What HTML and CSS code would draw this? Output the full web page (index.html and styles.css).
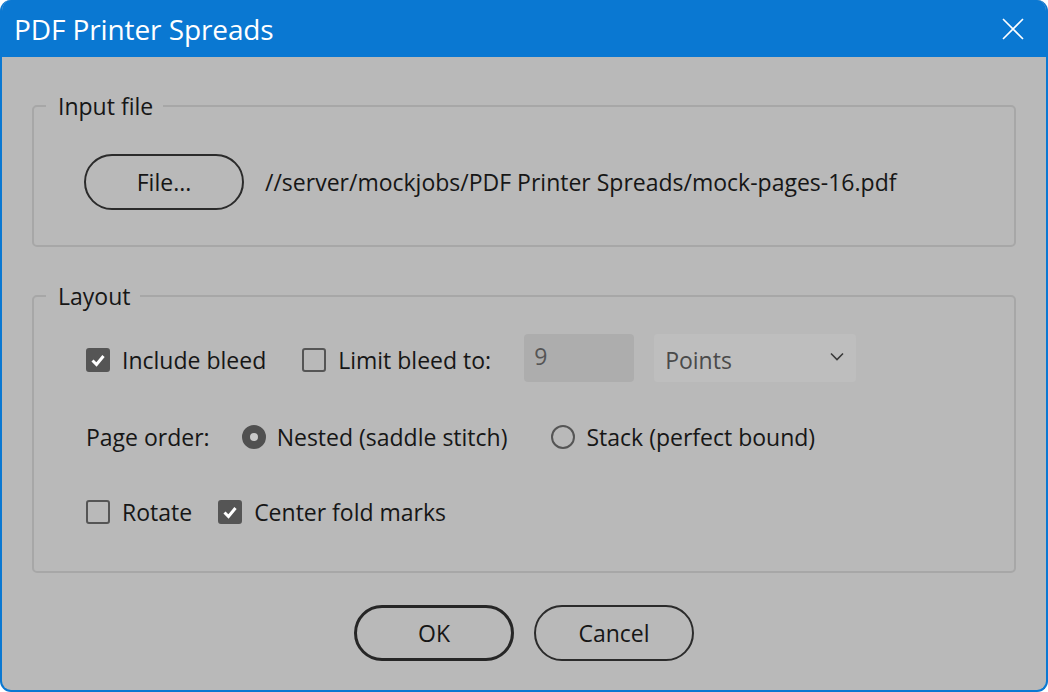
FILE: index.html
```html
<!DOCTYPE html>
<html>
<head>
<meta charset="utf-8">
<title>PDF Printer Spreads</title>
<link rel="stylesheet" href="styles.css">
</head>
<body>
<div class="window">
  <div class="titlebar">
    <span class="title">PDF Printer Spreads</span>
    <svg class="close" width="22" height="22" viewBox="0 0 22 22"><path d="M1 1L21 21M21 1L1 21" stroke="#fff" stroke-width="1.6" fill="none"/></svg>
  </div>
  <div class="content">
    <fieldset class="group group-input">
      <legend>Input file</legend>
      <div class="group-body file-row">
        <button class="btn">File...</button>
        <span class="path">//server/mockjobs/PDF Printer Spreads/mock-pages-16.pdf</span>
      </div>
    </fieldset>
    <fieldset class="group group-layout">
      <legend>Layout</legend>
      <div class="group-body">
        <div class="row row1">
          <span class="check checked"><svg width="24" height="24" viewBox="0 0 24 24"><path d="M6.5 12.5L10.5 16.5L17.5 8" stroke="#fff" stroke-width="3" fill="none"/></svg></span>
          <span class="label gap-36">Include bleed</span>
          <span class="check"></span>
          <span class="label gap-31">Limit bleed to:</span>
          <span class="input">9</span>
          <span class="select"><span>Points</span><svg width="14" height="9" viewBox="0 0 14 9"><path d="M1 1.5L7 7.5L13 1.5" stroke="#3a3a3a" stroke-width="1.6" fill="none"/></svg></span>
        </div>
        <div class="row row2">
          <span class="label gap-32">Page order:</span>
          <span class="radio on"></span>
          <span class="label gap-41">Nested (saddle stitch)</span>
          <span class="radio"></span>
          <span class="label">Stack (perfect bound)</span>
        </div>
        <div class="row row3">
          <span class="check"></span>
          <span class="label gap-26">Rotate</span>
          <span class="check checked"><svg width="24" height="24" viewBox="0 0 24 24"><path d="M6.5 12.5L10.5 16.5L17.5 8" stroke="#fff" stroke-width="3" fill="none"/></svg></span>
          <span class="label">Center fold marks</span>
        </div>
      </div>
    </fieldset>
    <div class="buttons">
      <button class="btn btn-default">OK</button>
      <button class="btn">Cancel</button>
    </div>
  </div>
</div>
</body>
</html>
```
FILE: styles.css
```css
* { box-sizing: border-box; }
html, body { margin: 0; padding: 0; background: #fff; }
body { font-family: "Open Sans", "Noto Sans", sans-serif; color: #161616; }
.window {
  width: 1048px; height: 692px;
  border: 2px solid #0a78d2; border-top: 0;
  border-radius: 11px;
  overflow: hidden;
  background: #b9b9b9;
  display: flex; flex-direction: column;
}
.titlebar {
  height: 57px; background: #0a78d2; color: #fff;
  display: flex; align-items: center; justify-content: space-between;
  padding: 0 22px 0 12px;
  flex: none;
}
.title { font-size: 28px; letter-spacing: -0.1px; }
.close { display: block; }
.content { padding: 34px 30px 0; }
.group {
  margin: 0; border: 2px solid #a7a7a7; border-radius: 5px;
  padding: 0 0 35px 0; min-width: 0;
}
.group legend {
  font-size: 23px; line-height: 30px; height: 30px;
  padding: 0 10px 0 12px; margin-left: 12px;
}
.group-body { padding-left: 50px; }
.group-input { padding-top: 33px; }
.group-layout { margin-top: 34px; padding-top: 23px; }
.file-row { display: flex; align-items: center; height: 56px; box-sizing: content-box; }
.btn {
  font-family: inherit; font-size: 23px; color: #161616;
  width: 160px; height: 56px; border: 2px solid #2b2b2b; border-radius: 28px;
  background: transparent; padding: 0; flex: none;
}
.path { font-size: 23px; margin-left: 21px; white-space: nowrap; }
.row { display: flex; align-items: center; font-size: 23px; }
.row1 { height: 48px; }
.row1 .check, .row1 .label { margin-top: 3px; }
.row2 { height: 48px; margin-top: 31px; margin-left: 2px; }
.row3 { height: 48px; margin-top: 27px; }
.check {
  width: 24px; height: 24px; border: 2px solid #555; border-radius: 3px; flex: none;
  margin-left: 2px; margin-right: 12px; position: relative;
}
.check.checked { background: #555; }
.check svg { position: absolute; left: -2px; top: -2px; }
.label { white-space: nowrap; }
.gap-36 { margin-right: 34px; }
.gap-31 { margin-right: 33px; }
.gap-32 { margin-right: 32px; }
.gap-41 { margin-right: 44px; }
.gap-26 { margin-right: 24px; }
.input {
  width: 110px; height: 48px; background: #adadad; border-radius: 4px;
  color: #555; padding: 7px 10px 0; line-height: 30px; margin-right: 20px; flex: none;
}
.select {
  width: 202px; height: 48px; background: #bebebe; border-radius: 4px; flex: none;
  color: #4a4a4a; display: flex; align-items: center; justify-content: space-between;
  padding: 3px 12px 0 11px;
}
.select svg { margin-top: -6px; }
.radio {
  width: 24px; height: 24px; border-radius: 50%; border: 2px solid #555; flex: none;
  margin-right: 11px;
}
.radio.on { border: 8px solid #505050; background: #c9c9c9; }
.buttons { display: flex; justify-content: center; gap: 20px; margin-top: 32px; }
.btn-default { border-width: 3px; border-color: #262626; }
```
